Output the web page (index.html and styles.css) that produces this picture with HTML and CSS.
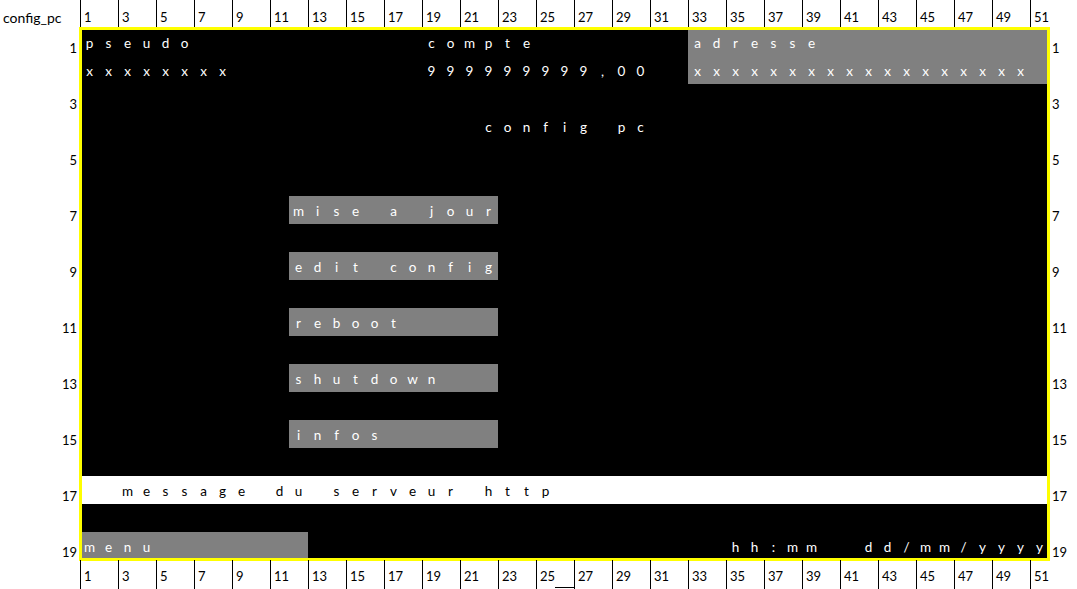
FILE: index.html
```html
<!DOCTYPE html>
<html>
<head>
<meta charset="utf-8">
<link rel="stylesheet" href="styles.css">
</head>
<body>
<div class="page">
  <div class="top">
    <div class="corner">config_pc</div>
    <div class="colhdr">
      <div>1</div><div>3</div><div>5</div><div>7</div><div>9</div><div>11</div><div>13</div><div>15</div><div>17</div><div>19</div><div>21</div><div>23</div><div>25</div><div>27</div><div>29</div><div>31</div><div>33</div><div>35</div><div>37</div><div>39</div><div>41</div><div>43</div><div>45</div><div>47</div><div>49</div><div class="last">51</div>
    </div>
  </div>
  <div class="mid">
    <div class="rowhdr left">
      <div>1</div><div>3</div><div>5</div><div>7</div><div>9</div><div>11</div><div>13</div><div>15</div><div>17</div><div class="last">19</div>
    </div>
    <div class="sheet">
      <div class="run pseudo"><span>p</span><span>s</span><span>e</span><span>u</span><span>d</span><span>o</span></div>
      <div class="run pseudo-val"><span>x</span><span>x</span><span>x</span><span>x</span><span>x</span><span>x</span><span>x</span><span>x</span></div>
      <div class="run compte"><span>c</span><span>o</span><span>m</span><span>p</span><span>t</span><span>e</span></div>
      <div class="run compte-val"><span>9</span><span>9</span><span>9</span><span>9</span><span>9</span><span>9</span><span>9</span><span>9</span><span>9</span><span>,</span><span>0</span><span>0</span></div>
      <div class="adresse">
        <div class="run"><span>a</span><span>d</span><span>r</span><span>e</span><span>s</span><span>s</span><span>e</span></div>
        <div class="run"><span>x</span><span>x</span><span>x</span><span>x</span><span>x</span><span>x</span><span>x</span><span>x</span><span>x</span><span>x</span><span>x</span><span>x</span><span>x</span><span>x</span><span>x</span><span>x</span><span>x</span><span>x</span></div>
      </div>
      <div class="run title"><span>c</span><span>o</span><span>n</span><span>f</span><span>i</span><span>g</span><span></span><span>p</span><span>c</span></div>
      <div class="run btn b1"><span>m</span><span>i</span><span>s</span><span>e</span><span></span><span>a</span><span></span><span>j</span><span>o</span><span>u</span><span>r</span></div>
      <div class="run btn b2"><span>e</span><span>d</span><span>i</span><span>t</span><span></span><span>c</span><span>o</span><span>n</span><span>f</span><span>i</span><span>g</span></div>
      <div class="run btn b3"><span>r</span><span>e</span><span>b</span><span>o</span><span>o</span><span>t</span></div>
      <div class="run btn b4"><span>s</span><span>h</span><span>u</span><span>t</span><span>d</span><span>o</span><span>w</span><span>n</span></div>
      <div class="run btn b5"><span>i</span><span>n</span><span>f</span><span>o</span><span>s</span></div>
      <div class="run msg"><span></span><span></span><span>m</span><span>e</span><span>s</span><span>s</span><span>a</span><span>g</span><span>e</span><span></span><span>d</span><span>u</span><span></span><span>s</span><span>e</span><span>r</span><span>v</span><span>e</span><span>u</span><span>r</span><span></span><span>h</span><span>t</span><span>t</span><span>p</span></div>
      <div class="run btn menu"><span>m</span><span>e</span><span>n</span><span>u</span></div>
      <div class="run clock"><span>h</span><span>h</span><span>:</span><span>m</span><span>m</span><span></span><span></span><span>d</span><span>d</span><span>/</span><span>m</span><span>m</span><span>/</span><span>y</span><span>y</span><span>y</span><span>y</span></div>
    </div>
    <div class="rowhdr right">
      <div>1</div><div>3</div><div>5</div><div>7</div><div>9</div><div>11</div><div>13</div><div>15</div><div>17</div><div class="last">19</div>
    </div>
  </div>
  <div class="bottom">
    <div class="spacer"></div>
    <div class="colhdr">
      <div>1</div><div>3</div><div>5</div><div>7</div><div>9</div><div>11</div><div>13</div><div>15</div><div>17</div><div>19</div><div>21</div><div>23</div><div class="marked">25</div><div>27</div><div>29</div><div>31</div><div>33</div><div>35</div><div>37</div><div>39</div><div>41</div><div>43</div><div>45</div><div>47</div><div>49</div><div class="last">51</div>
    </div>
  </div>
</div>
</body>
</html>
```

FILE: styles.css
```css
html, body {
  margin: 0;
  padding: 0;
  background: #ffffff;
}
body {
  font-family: Lato, "Liberation Sans", sans-serif;
  font-size: 13px;
  color: #000000;
}
.page {
  width: 1077px;
  height: 589px;
  overflow: hidden;
}
.top {
  display: flex;
  height: 28px;
}
.corner {
  width: 80px;
  box-sizing: border-box;
  padding-left: 3px;
  padding-top: 10px;
  line-height: 16px;
  font-size: 14px;
}
.colhdr {
  display: grid;
  grid-template-columns: repeat(51, 19px);
  grid-auto-rows: 28px;
}
.colhdr > div {
  grid-column: span 2;
  grid-row: 1;
  border-left: 1px solid #000;
  box-sizing: border-box;
  padding-left: 3px;
  padding-top: 9px;
  line-height: 16px;
  white-space: nowrap;
}
.colhdr > div.last {
  grid-column: span 1;
}
.bottom {
  display: flex;
  height: 29px;
}
.bottom .colhdr {
  grid-auto-rows: 29px;
}
.bottom .colhdr > div {
  padding-top: 8px;
}
.bottom .colhdr > div.marked {
  background-image: linear-gradient(#000, #000);
  background-repeat: no-repeat;
  background-size: 19px 1px;
  background-position: right 0 bottom 1px;
}
.spacer {
  width: 80px;
}
.mid {
  display: flex;
  height: 532px;
}
.rowhdr {
  display: flex;
  flex-direction: column;
}
.rowhdr > div {
  height: 56px;
  box-sizing: border-box;
  padding-top: 12px;
  line-height: 16px;
  flex-shrink: 0;
}
.rowhdr > div.last {
  height: 28px;
}
.rowhdr.left {
  width: 80px;
  text-align: right;
}
.rowhdr.left > div {
  padding-right: 3px;
}
.rowhdr.right {
  flex: 1;
  padding-left: 3px;
}
.sheet {
  width: 969px;
  height: 532px;
  background: #000000;
  outline: 3px solid #ffff00;
  outline-offset: -2px;
  display: grid;
  grid-template-columns: repeat(51, 19px);
  grid-template-rows: repeat(19, 28px);
  color: #ffffff;
  font-size: 13.5px;
}
.run {
  display: flex;
  line-height: 30px;
  height: 28px;
  white-space: nowrap;
}
.run > span {
  width: 19px;
  flex-shrink: 0;
  text-align: center;
}
.pseudo { grid-area: 1 / 1 / 2 / 7; }
.pseudo-val { grid-area: 2 / 1 / 3 / 9; }
.compte { grid-area: 1 / 19 / 2 / 25; }
.compte-val { grid-area: 2 / 19 / 3 / 31; }
.adresse {
  grid-area: 1 / 33 / 3 / 52;
  background: #808080;
  display: flex;
  flex-direction: column;
}
.title { grid-area: 4 / 22 / 5 / 31; }
.btn { background: #808080; }
.b1 { grid-area: 7 / 12 / 8 / 23; }
.b2 { grid-area: 9 / 12 / 10 / 23; }
.b3 { grid-area: 11 / 12 / 12 / 23; }
.b4 { grid-area: 13 / 12 / 14 / 23; }
.b5 { grid-area: 15 / 12 / 16 / 23; }
.msg {
  grid-area: 17 / 1 / 18 / 52;
  background: #ffffff;
  color: #000000;
}
.menu { grid-area: 19 / 1 / 20 / 13; }
.clock { grid-area: 19 / 35 / 20 / 52; }
```
